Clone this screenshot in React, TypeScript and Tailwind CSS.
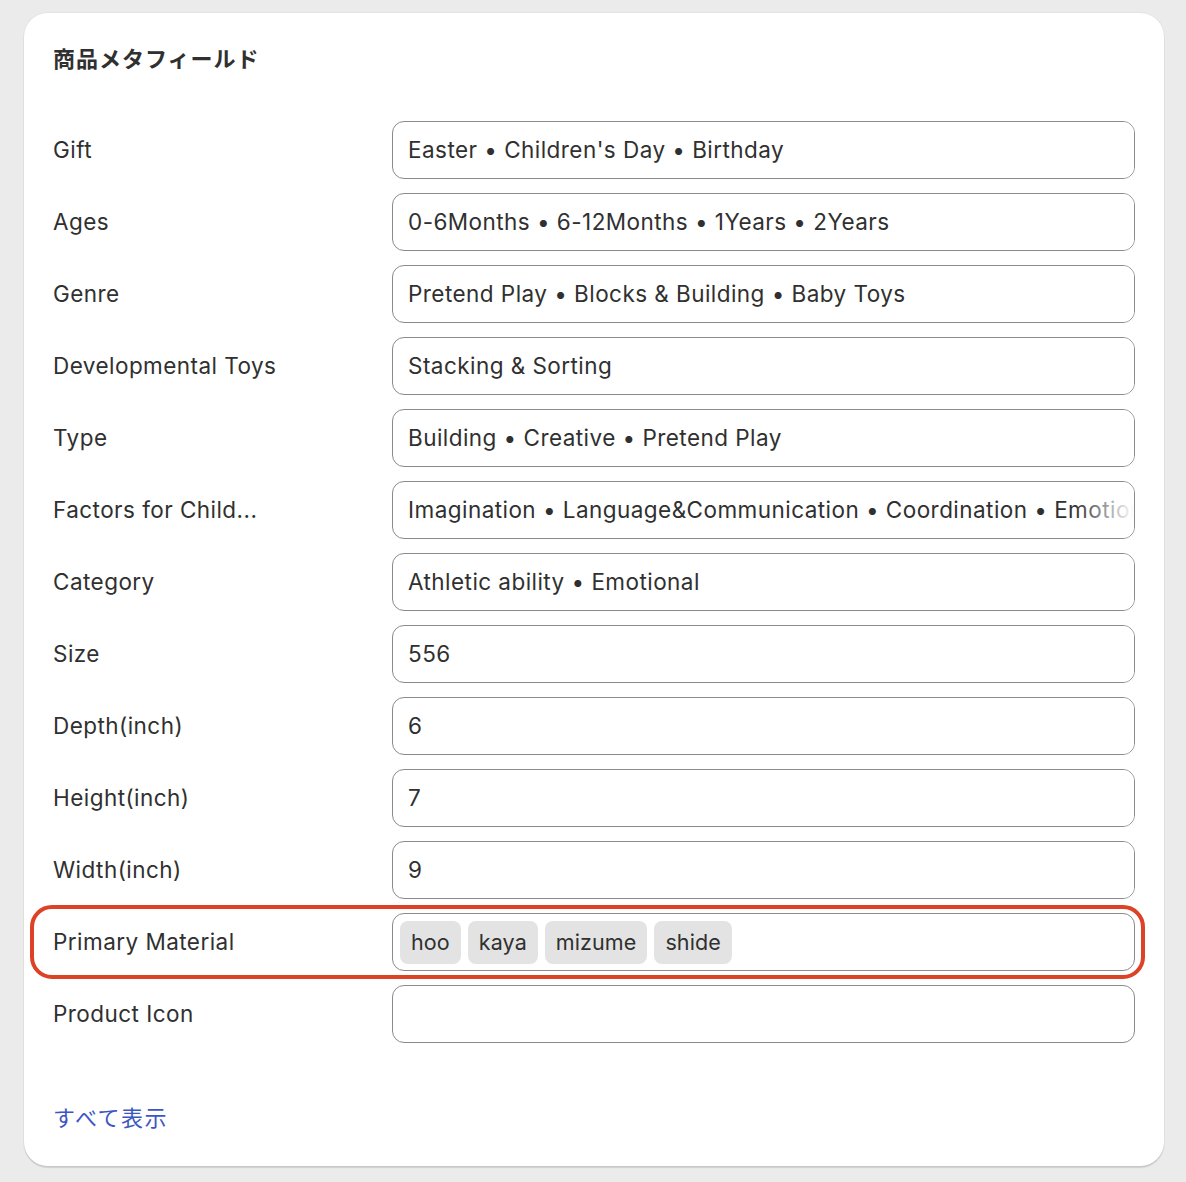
const fields = [
  { label: "Gift", values: ["Easter", "Children's Day", "Birthday"] },
  { label: "Ages", values: ["0-6Months", "6-12Months", "1Years", "2Years"] },
  { label: "Genre", values: ["Pretend Play", "Blocks & Building", "Baby Toys"] },
  { label: "Developmental Toys", values: ["Stacking & Sorting"] },
  { label: "Type", values: ["Building", "Creative", "Pretend Play"] },
  {
    label: "Factors for Child...",
    values: ["Imagination", "Language&Communication", "Coordination", "Emotional"],
  },
  { label: "Category", values: ["Athletic ability", "Emotional"] },
  { label: "Size", values: ["556"] },
  { label: "Depth(inch)", values: ["6"] },
  { label: "Height(inch)", values: ["7"] },
  { label: "Width(inch)", values: ["9"] },
];

const materials = ["hoo", "kaya", "mizume", "shide"];

const App = () => {
  return (
    <div
      className="min-h-[1182px] w-full bg-[#ebebeb] px-[24px] pt-[13px] text-[#303030]"
      style={{ fontFamily: "Inter, 'Noto Sans CJK JP', sans-serif" }}
    >
      <section className="w-[1140px] rounded-[24px] bg-white px-[29px] pt-[28px] pb-[32px] shadow-[0_2px_1px_rgba(0,0,0,0.12),0_0_0_1px_rgba(0,0,0,0.03)]">
        <h2 className="text-[22px] font-bold leading-[36px] tracking-[1px]">商品メタフィールド</h2>

        <div className="mt-[44px] flex flex-col gap-[14px] text-[22.5px] tracking-[0.45px]">
          {fields.map((f) => (
            <div key={f.label} className="flex items-center">
              <div className="w-[339px] shrink-0">{f.label}</div>
              <div className="relative flex h-[58px] flex-1 items-center overflow-hidden rounded-[12px] border border-[#8a8a8a] px-[15px]">
                <span className="whitespace-nowrap">{f.values.join(" • ")}</span>
                <div className="absolute inset-y-0 right-0 w-[60px] bg-gradient-to-r from-white/0 to-white" />
              </div>
            </div>
          ))}

          <div className="relative flex items-center">
            <div className="pointer-events-none absolute -top-[8px] -bottom-[8px] -left-[23px] -right-[10px] rounded-[22px] border-[4px] border-[#dc4226]" />
            <div className="w-[339px] shrink-0">Primary Material</div>
            <div className="flex h-[58px] flex-1 items-center gap-[7px] rounded-[12px] border border-[#8a8a8a] px-[7px]">
              {materials.map((m) => (
                <span
                  key={m}
                  className="flex h-[43px] items-center rounded-[8px] bg-[#e3e3e3] px-[11px] text-[21.5px] tracking-[0.1px]"
                >
                  {m}
                </span>
              ))}
            </div>
          </div>

          <div className="flex items-center">
            <div className="w-[339px] shrink-0">Product Icon</div>
            <div className="h-[58px] flex-1 rounded-[12px] border border-[#8a8a8a]" />
          </div>
        </div>

        <a className="mt-[59px] block text-[22px] leading-[32px] tracking-[1.5px] text-[#3c56c4]" href="#">
          すべて表示
        </a>
      </section>
    </div>
  );
};

export default App;
